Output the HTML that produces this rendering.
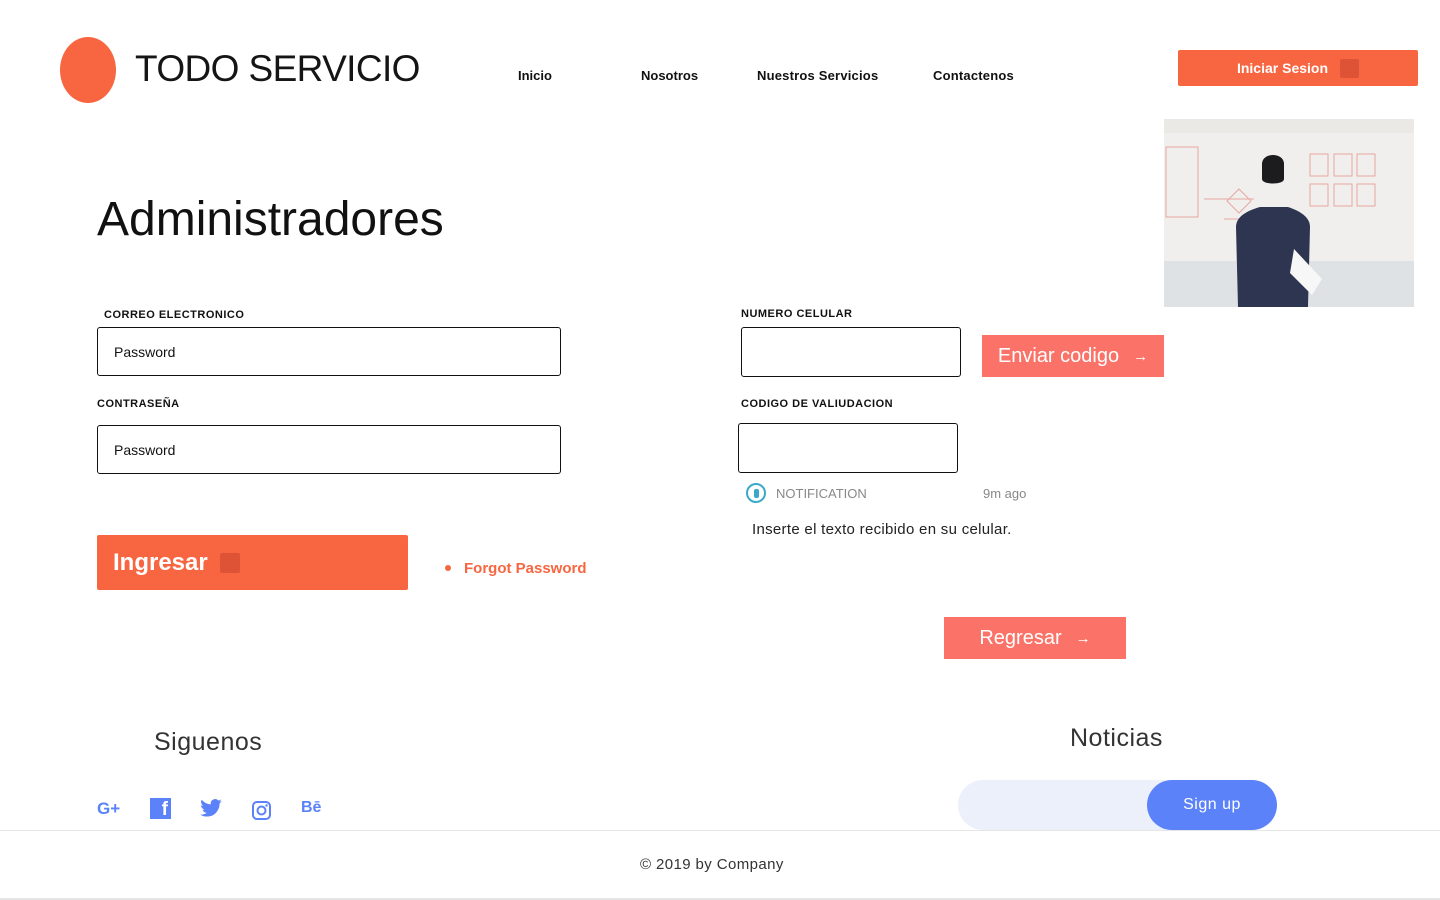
<!DOCTYPE html>
<html><head><meta charset="utf-8"><style>
*{margin:0;padding:0;box-sizing:border-box}
body{width:1440px;height:900px;position:relative;background:#fff;font-family:"Liberation Sans",sans-serif;color:#111;overflow:hidden}
.a{position:absolute}
.lbl{font-size:11px;font-weight:bold;letter-spacing:.5px;color:#111}
.in{border:1px solid #111;border-radius:3px;font-size:14px;padding-left:16px;display:flex;align-items:center}
.nav{font-size:13px;font-weight:bold;top:68px}
.btnr{background:#fa7268;color:#fff;font-size:20px;display:flex;align-items:center;justify-content:center;gap:14px}
</style></head><body>
<div class="a" style="left:60px;top:37px;width:56px;height:66px;border-radius:50%;background:#f86641"></div>
<div class="a" style="left:135px;top:48px;font-size:37px;letter-spacing:-0.6px;color:#151515">TODO SERVICIO</div>
<div class="a nav" style="left:518px">Inicio</div>
<div class="a nav" style="left:641px">Nosotros</div>
<div class="a nav" style="left:757px;letter-spacing:.2px">Nuestros Servicios</div>
<div class="a nav" style="left:933px;letter-spacing:.2px">Contactenos</div>
<div class="a" style="left:1178px;top:50px;width:240px;height:36px;background:#f86641;border-radius:2px;color:#fff;font-weight:bold;font-size:14px;display:flex;align-items:center;justify-content:center;gap:12px">Iniciar Sesion <span style="width:19px;height:19px;background:#de5335;border-radius:2px;display:inline-block"></span></div>
<svg class="a" style="left:1164px;top:119px" width="250" height="188" viewBox="0 0 250 188">
<rect width="250" height="188" fill="#f0efed"/><rect y="0" width="250" height="14" fill="#ebe9e6"/>
<rect y="142" width="250" height="46" fill="#dfe2e5"/>
<g stroke="#e8a7a0" fill="none" stroke-width="1"><rect x="2" y="28" width="32" height="70"/><rect x="146" y="35" width="18" height="22"/><rect x="170" y="35" width="18" height="22"/><rect x="193" y="35" width="18" height="22"/><rect x="146" y="65" width="18" height="22"/><rect x="170" y="65" width="18" height="22"/><rect x="193" y="65" width="18" height="22"/><path d="M40 80h50M75 70l12 12-12 12-12-12z M60 100h40"/></g>
<path d="M98 45c0-12 22-12 22 0v15c0 6-22 6-22 0z" fill="#1c1c1e"/>
<path d="M74 188l-2-80c0-10 10-16 24-20h28c12 4 22 10 22 20l-2 80z" fill="#2d3550"/>
<path d="M130 130l28 30-10 16-22-22z" fill="#f7f7f7"/>
</svg>
<div class="a" style="left:97px;top:192px;font-size:48px;color:#111">Administradores</div>
<div class="a lbl" style="left:104px;top:309px">CORREO ELECTRONICO</div>
<div class="a in" style="left:97px;top:327px;width:464px;height:49px">Password</div>
<div class="a lbl" style="left:97px;top:398px">CONTRASEÑA</div>
<div class="a in" style="left:97px;top:425px;width:464px;height:49px">Password</div>
<div class="a" style="left:97px;top:535px;width:311px;height:55px;background:#f86641;border-radius:2px;color:#fff;font-weight:bold;font-size:24px;display:flex;align-items:center;padding-left:16px;gap:12px">Ingresar <span style="width:20px;height:20px;background:#de5335;border-radius:2px"></span></div>
<div class="a" style="left:445px;top:565px;width:6px;height:6px;border-radius:50%;background:#f86641"></div>
<div class="a" style="left:464px;top:560px;color:#f86641;font-weight:bold;font-size:15px">Forgot Password</div>
<div class="a lbl" style="left:741px;top:308px">NUMERO CELULAR</div>
<div class="a in" style="left:741px;top:327px;width:220px;height:50px"></div>
<div class="a btnr" style="left:982px;top:335px;width:182px;height:42px">Enviar codigo <span style="font-size:15px">→</span></div>
<div class="a lbl" style="left:741px;top:398px">CODIGO DE VALIUDACION</div>
<div class="a in" style="left:738px;top:423px;width:220px;height:50px"></div>
<div class="a" style="left:746px;top:483px;width:20px;height:20px;border:2px solid #3aa9c9;border-radius:50%"><div style="margin:4px auto 0;width:5px;height:9px;background:#3aa9c9;border-radius:2px"></div></div>
<div class="a" style="left:776px;top:486px;font-size:13px;color:#888">NOTIFICATION</div>
<div class="a" style="left:983px;top:486px;font-size:13px;color:#888">9m ago</div>
<div class="a" style="left:752px;top:521px;font-size:15px;color:#222;letter-spacing:.3px">Inserte el texto recibido en su celular.</div>
<div class="a btnr" style="left:944px;top:617px;width:182px;height:42px">Regresar <span style="font-size:15px">→</span></div>
<div class="a" style="left:154px;top:728px;font-size:25px;color:#333;letter-spacing:.5px">Siguenos</div>
<div class="a" style="left:1070px;top:724px;font-size:25px;color:#333;letter-spacing:.5px">Noticias</div>
<div class="a" style="left:97px;top:799px;color:#5b82f8;font-weight:bold;font-size:17px">G+</div>
<div class="a" style="left:150px;top:798px;width:21px;height:21px;background:#5b82f8;color:#fff;font-weight:bold;font-size:19px;text-align:right;padding-right:3px;line-height:24px;overflow:hidden">f</div>
<svg class="a" style="left:200px;top:799px" width="22" height="18" viewBox="0 0 24 20"><path fill="#5b82f8" d="M24 2.4a10 10 0 0 1-2.8.8 5 5 0 0 0 2.1-2.7 10 10 0 0 1-3.1 1.2A4.9 4.9 0 0 0 11.8 6 14 14 0 0 1 1.7.9a4.9 4.9 0 0 0 1.5 6.6 4.9 4.9 0 0 1-2.2-.6 4.9 4.9 0 0 0 3.900 4.9 5 5 0 0 1-2.2.1 4.9 4.9 0 0 0 4.6 3.4A9.9 9.9 0 0 1 0 17.3 14 14 0 0 0 7.5 19.5c9 0 14-7.5 14-14v-.6A10 10 0 0 0 24 2.4z"/></svg>
<svg class="a" style="left:252px;top:801px" width="19" height="19" viewBox="0 0 19 19"><rect x="1" y="1" width="17" height="17" rx="4" fill="none" stroke="#5b82f8" stroke-width="2"/><circle cx="9.5" cy="9.5" r="4" fill="none" stroke="#5b82f8" stroke-width="2"/><circle cx="14.5" cy="4.5" r="1.2" fill="#5b82f8"/></svg>
<div class="a" style="left:301px;top:799px;color:#5b82f8;font-weight:bold;font-size:16px">Bē</div>
<div class="a" style="left:958px;top:780px;width:318px;height:50px;border-radius:25px;background:#ecf0fb"></div>
<div class="a" style="left:1147px;top:780px;width:130px;height:50px;border-radius:25px;background:#5b82f8;color:#fff;font-size:16px;display:flex;align-items:center;justify-content:center;letter-spacing:.5px">Sign up</div>
<div class="a" style="left:0;top:830px;width:1440px;height:1px;background:#e6e6e6"></div>
<div class="a" style="left:640px;top:856px;font-size:15px;color:#333;letter-spacing:.4px">© 2019 by Company</div>
<div class="a" style="left:0;top:898px;width:1440px;height:2px;background:#e6e6e6"></div>
</body></html>
